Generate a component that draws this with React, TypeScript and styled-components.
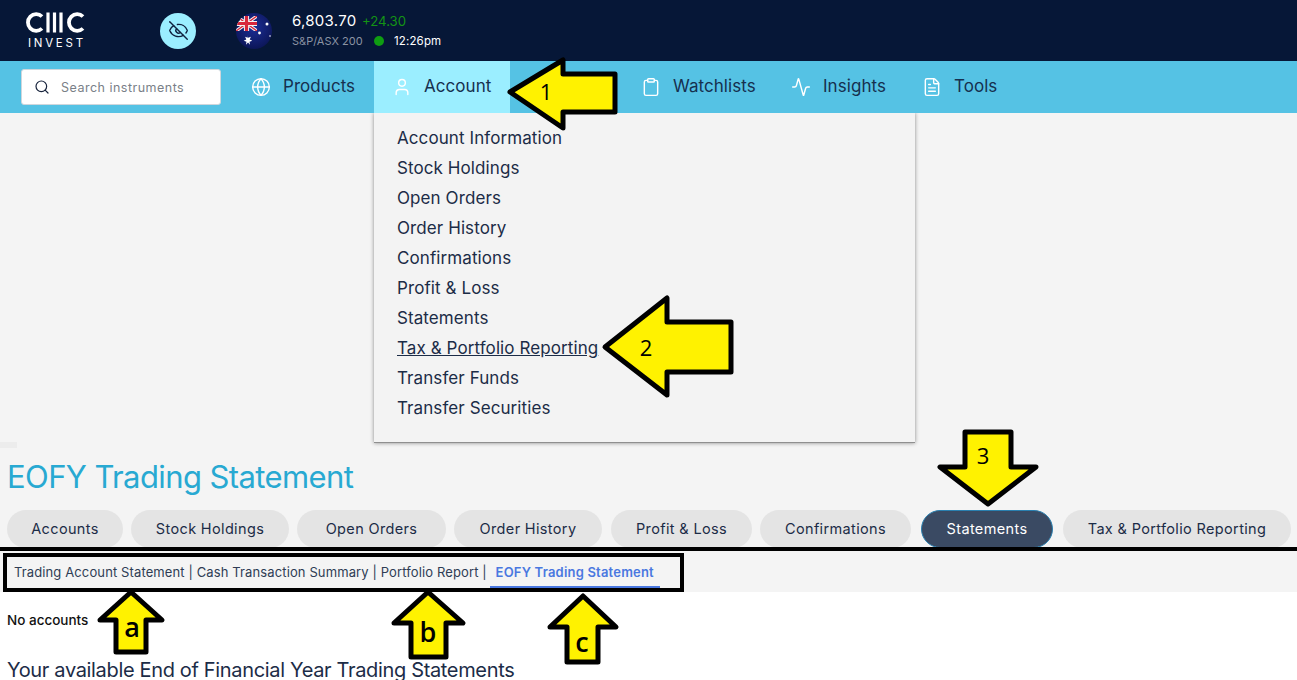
import React from "react";
import styled, { createGlobalStyle } from "styled-components";
import { Globe, User, Clipboard, Activity, FileText, Search, EyeOff } from "lucide-react";

const FONT = `Inter, "Liberation Sans", sans-serif`;

const Global = createGlobalStyle`
  html, body { margin: 0; padding: 0; background: #fff; overflow: hidden; }
  body { font-family: ${FONT}; }
`;

const Page = styled.div`
  position: relative;
  width: 1297px;
  height: 680px;
  overflow: hidden;
  background: #fff;
`;

const TopBar = styled.header`
  height: 61px;
  background: #061737;
  display: flex;
  align-items: center;
  padding-left: 26px;
  box-sizing: border-box;
`;

const Logo = styled.div`
  width: 59px;
  display: flex;
  flex-direction: column;
  align-items: center;
  margin-right: 75px;
`;

const LogoWord = styled.span`
  font-size: 11.5px;
  line-height: 12px;
  letter-spacing: 2.75px;
  margin-right: -2.75px;
  margin-top: 4px;
  color: #fff;
`;

const EyeButton = styled.div`
  width: 36px;
  height: 36px;
  border-radius: 50%;
  background: #9beeff;
  color: #10213f;
  display: flex;
  align-items: center;
  justify-content: center;
  margin-right: 40px;
`;

const Flag = styled.svg`
  width: 36px;
  height: 36px;
  margin-right: 20px;
`;

const Quote = styled.div`
  display: flex;
  flex-direction: column;
  gap: 4px;
  margin-top: -1px;
`;

const QuoteRow = styled.div`
  display: flex;
  align-items: center;
  white-space: nowrap;
`;

const Price = styled.span`
  font-size: 15px;
  line-height: 18px;
  color: #fff;
  letter-spacing: 0.27px;
`;

const Change = styled.span`
  font-size: 13.2px;
  line-height: 18px;
  color: #149414;
  margin-left: 5.5px;
`;

const IndexName = styled.span`
  font-size: 11px;
  line-height: 14px;
  color: #8b93a3;
  width: 82px;
`;

const Dot = styled.span`
  width: 10px;
  height: 10px;
  border-radius: 50%;
  background: #0f9d12;
  margin-right: 10px;
`;

const Clock = styled.span`
  font-size: 11.5px;
  line-height: 14px;
  letter-spacing: 0.15px;
  color: #fff;
`;

const NavBar = styled.nav`
  height: 52px;
  background: #55c2e4;
  display: flex;
  align-items: stretch;
  padding-left: 21px;
`;

const SearchBox = styled.div`
  width: 200px;
  height: 36px;
  margin-top: 8px;
  margin-right: 12px;
  box-sizing: border-box;
  background: #fff;
  border: 1px solid #cfd6dc;
  border-radius: 3px;
  display: flex;
  align-items: center;
  gap: 11px;
  padding-left: 12px;
  color: #17233c;
`;

const SearchHint = styled.span`
  font-size: 12.5px;
  color: #7a7f88;
  letter-spacing: 0.49px;
`;

const NavItem = styled.div<{ $active?: boolean }>`
  display: flex;
  align-items: center;
  gap: 12px;
  padding: 0 18px;
  background: ${(p) => (p.$active ? "#9beeff" : "transparent")};
  color: #fff;
`;

const NavIcon = styled.span`
  display: flex;
  width: 20px;
  justify-content: center;
`;

const NavLabel = styled.span<{ $w: number }>`
  width: ${(p) => p.$w}px;
  font-size: 17px;
  color: #16304f;
  letter-spacing: 0.05px;
  padding-bottom: 2px;
  white-space: nowrap;
`;

const NavSpacer = styled.div`
  width: 113px;
`;

const Blank = styled.div`
  height: 329px;
  background: #f4f4f4;
  position: relative;
`;

const Crumb = styled.div`
  position: absolute;
  left: 0;
  bottom: -6px;
  width: 17px;
  height: 6px;
  background: #ececec;
`;

const Dropdown = styled.ul`
  position: absolute;
  left: 374px;
  top: 0;
  width: 541px;
  height: 330px;
  margin: 0;
  padding: 10px 0 0 23px;
  box-sizing: border-box;
  list-style: none;
  background: #f3f3f3;
  border-bottom: 1px solid #8f8f8f;
  box-shadow: 0 0 4px rgba(0, 0, 0, 0.45);
  clip-path: inset(0 -8px -8px -8px);
`;

const DropItem = styled.li<{ $hover?: boolean }>`
  font-size: 17px;
  line-height: 30px;
  letter-spacing: 0.09px;
  color: #1c2c47;
  text-decoration: ${(p) => (p.$hover ? "underline" : "none")};
`;

const TitleArea = styled.section`
  background: #f4f4f4;
  height: 105px;
  padding: 16px 0 0 7px;
  box-sizing: border-box;
`;

const Title = styled.h1`
  margin: 0;
  font-size: 31px;
  line-height: 38px;
  font-weight: 400;
  letter-spacing: -0.6px;
  color: #28a9d2;
`;

const Tabs = styled.div`
  display: flex;
  margin-top: 14px;
`;

const Tab = styled.div<{ $active?: boolean; $w: number; $gap: number }>`
  width: ${(p) => p.$w}px;
  height: 38px;
  margin-right: ${(p) => p.$gap}px;
  padding-bottom: 2px;
  box-sizing: border-box;
  border-radius: 19px;
  display: flex;
  align-items: center;
  justify-content: center;
  font-size: 14.5px;
  letter-spacing: 0.35px;
  white-space: nowrap;
  color: ${(p) => (p.$active ? "#fff" : "#1c2c47")};
  background: ${(p) => (p.$active ? "#3a4a63" : "#e4e4e4")};
  border: ${(p) => (p.$active ? "1px solid #2a80b0" : "none")};
`;

const SubBar = styled.div`
  height: 45px;
  background: #f4f4f4;
  padding: 9px 0 0 14px;
  box-sizing: border-box;
  display: flex;
  align-items: flex-start;
  font-size: 13px;
  letter-spacing: 0.12px;
  color: #2f3d55;
`;

const SubLink = styled.span`
  line-height: 32px;
  white-space: pre;
`;

const SubActive = styled.span`
  line-height: 32px;
  height: 30px;
  padding: 0 6px;
  margin-left: -1px;
  letter-spacing: 0.2px;
  color: #4a78e0;
  font-weight: 600;
  border-bottom: 2px solid #4a78e0;
`;

const Body = styled.main`
  padding: 18px 0 0 7px;
`;

const Notice = styled.p`
  margin: 0;
  font-size: 13.5px;
  line-height: 20px;
  font-weight: 500;
  color: #111;
`;

const Heading = styled.h2`
  margin: 27px 0 0 0;
  font-size: 20px;
  line-height: 26px;
  font-weight: 400;
  letter-spacing: -0.34px;
  color: #1c2c47;
  white-space: nowrap;
`;

const Annotations = styled.svg`
  position: absolute;
  left: 0;
  top: 0;
  pointer-events: none;
`;

const ArrowShape = styled.polygon`
  fill: #fff200;
  stroke: #000;
  stroke-width: 5;
  stroke-linejoin: round;
`;

const ArrowLabel = styled.text<{ $big?: boolean }>`
  font-family: "Open Sans", sans-serif;
  font-size: ${(p) => (p.$big ? 27 : 22)}px;
  font-weight: ${(p) => (p.$big ? 600 : 400)};
  fill: #000;
  text-anchor: middle;
`;

const nav = [
  { label: "Products", Icon: Globe, w: 73 },
  { label: "Account", Icon: User, w: 68, active: true },
];
const nav2 = [
  { label: "Watchlists", Icon: Clipboard, w: 82 },
  { label: "Insights", Icon: Activity, w: 63 },
  { label: "Tools", Icon: FileText, w: 44 },
];

const menu = [
  "Account Information",
  "Stock Holdings",
  "Open Orders",
  "Order History",
  "Confirmations",
  "Profit & Loss",
  "Statements",
  "Tax & Portfolio Reporting",
  "Transfer Funds",
  "Transfer Securities",
];

const tabs = [
  { label: "Accounts", w: 116, gap: 8 },
  { label: "Stock Holdings", w: 158, gap: 8 },
  { label: "Open Orders", w: 149, gap: 8 },
  { label: "Order History", w: 148, gap: 9 },
  { label: "Profit & Loss", w: 141, gap: 8 },
  { label: "Confirmations", w: 151, gap: 10 },
  { label: "Statements", w: 132, gap: 10, active: true },
  { label: "Tax & Portfolio Reporting", w: 228, gap: 0 },
];

const arrows = [
  { points: "510,92 563,60 563,74 615,74 615,112 563,112 563,128", label: "1", x: 546, y: 100 },
  { points: "605,347 667,298 667,322 731,322 731,372 667,372 667,395", label: "2", x: 646, y: 356 },
  { points: "965,432 1011,432 1011,467 1036,467 988,504 940,467 965,467", label: "3", x: 983, y: 464 },
  { points: "131,592 162,620 146,620 146,652 116,652 116,620 100,620", label: "a", x: 132, y: 637, big: true },
  { points: "428,592 463,623 446,623 446,657 411,657 411,623 394,623", label: "b", x: 428, y: 642, big: true },
  { points: "583,596 616,627 598,627 598,662 567,662 567,627 550,627", label: "c", x: 582, y: 652, big: true },
];

export default function App() {
  return (
    <Page>
      <Global />
      <TopBar>
        <Logo>
          <svg width="59" height="21" viewBox="0 0 59 21" fill="none" stroke="#fff" strokeWidth="3.8">
            <path d="M16 4.5A8.3 8.3 0 1 0 16 16.5" />
            <path d="M22 0.5v20M28.5 0.5v20M35 0.5v20" strokeWidth="3.2" />
            <path d="M57 4.5A8.3 8.3 0 1 0 57 16.5" />
          </svg>
          <LogoWord>INVEST</LogoWord>
        </Logo>
        <EyeButton>
          <EyeOff size={21} strokeWidth={1.6} />
        </EyeButton>
        <Flag viewBox="0 0 36 36">
          <defs>
            <clipPath id="flagDisc">
              <circle cx="18" cy="18" r="18" />
            </clipPath>
            <clipPath id="flagJack">
              <rect x="0" y="3" width="21" height="15" />
            </clipPath>
            <radialGradient id="flagShade" cx="50%" cy="40%" r="60%">
              <stop offset="0%" stopColor="#1c2d96" />
              <stop offset="100%" stopColor="#0c1658" />
            </radialGradient>
          </defs>
          <g clipPath="url(#flagDisc)">
            <rect width="36" height="36" fill="url(#flagShade)" />
            <g clipPath="url(#flagJack)">
              <path d="M0 3L21 18M21 3L0 18" stroke="#f3f3f3" strokeWidth="3.4" />
              <path d="M0 3L21 18M21 3L0 18" stroke="#d8263c" strokeWidth="1.4" />
              <path d="M10.5 3V18M0 10.5H21" stroke="#f3f3f3" strokeWidth="5.2" />
              <path d="M10.5 3V18M0 10.5H21" stroke="#d8263c" strokeWidth="3.2" />
            </g>
            <path
              d="M11 22l1.1 2.8 2.8-1-1.2 2.7 2.6 1.3-2.8.9.6 3-2.1-2.3-2.1 2.3.6-3-2.8-.9 2.6-1.3-1.2-2.7 2.8 1z"
              fill="#fff"
            />
            <circle cx="31" cy="11" r="1.5" fill="#fff" />
            <circle cx="23.5" cy="20" r="1.4" fill="#fff" />
            <circle cx="34" cy="23" r="0.8" fill="#fff" />
          </g>
        </Flag>
        <Quote>
          <QuoteRow>
            <Price>6,803.70</Price>
            <Change>+24.30</Change>
          </QuoteRow>
          <QuoteRow>
            <IndexName>S&amp;P/ASX 200</IndexName>
            <Dot />
            <Clock>12:26pm</Clock>
          </QuoteRow>
        </Quote>
      </TopBar>
      <NavBar>
        <SearchBox>
          <Search size={16} strokeWidth={1.8} />
          <SearchHint>Search instruments</SearchHint>
        </SearchBox>
        {nav.map(({ label, Icon, active, w }) => (
          <NavItem key={label} $active={active}>
            <NavIcon>
              <Icon size={20} strokeWidth={1.7} />
            </NavIcon>
            <NavLabel $w={w}>{label}</NavLabel>
          </NavItem>
        ))}
        <NavSpacer />
        {nav2.map(({ label, Icon, w }) => (
          <NavItem key={label}>
            <NavIcon>
              <Icon size={20} strokeWidth={1.7} />
            </NavIcon>
            <NavLabel $w={w}>{label}</NavLabel>
          </NavItem>
        ))}
      </NavBar>
      <Blank>
        <Crumb />
        <Dropdown>
          {menu.map((m) => (
            <DropItem key={m} $hover={m.startsWith("Tax")}>
              {m}
            </DropItem>
          ))}
        </Dropdown>
      </Blank>
      <TitleArea>
        <Title>EOFY Trading Statement</Title>
        <Tabs>
          {tabs.map((t) => (
            <Tab key={t.label} $w={t.w} $gap={t.gap} $active={t.active}>
              {t.label}
            </Tab>
          ))}
        </Tabs>
      </TitleArea>
      <SubBar>
        <SubLink>Trading Account Statement | Cash Transaction Summary | Portfolio Report | </SubLink>
        <SubActive>EOFY Trading Statement</SubActive>
      </SubBar>
      <Body>
        <Notice>No accounts</Notice>
        <Heading>Your available End of Financial Year Trading Statements</Heading>
      </Body>
      <Annotations width="1297" height="680" viewBox="0 0 1297 680">
        <rect x="0" y="547" width="1297" height="4" fill="#000" />
        <rect x="5" y="555" width="677" height="35" fill="none" stroke="#000" strokeWidth="4" />
        {arrows.map((a) => (
          <g key={a.label}>
            <ArrowShape points={a.points} />
            <ArrowLabel x={a.x} y={a.y} $big={a.big}>
              {a.label}
            </ArrowLabel>
          </g>
        ))}
      </Annotations>
    </Page>
  );
}
